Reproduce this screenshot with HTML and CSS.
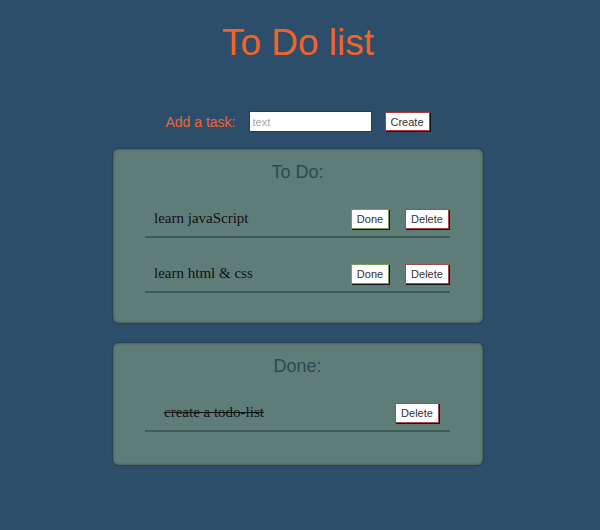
FILE: index.html
```html
<!DOCTYPE html>
<html>
<head>
<meta charset="utf-8">
<title>To Do list</title>
<link rel="stylesheet" href="styles.css">
</head>
<body>
<h1 class="title">To Do list</h1>
<div class="add-row">
  <label class="add-label" for="task">Add a task:</label>
  <input class="add-input" id="task" type="text" placeholder="text">
  <button class="btn btn-create">Create</button>
</div>
<section class="card card-todo">
  <h2 class="card-title">To Do:</h2>
  <ul class="list">
    <li class="item">
      <span class="item-text">learn javaScript</span>
      <button class="btn btn-done">Done</button>
      <button class="btn btn-delete">Delete</button>
    </li>
    <li class="item">
      <span class="item-text">learn html &amp; css</span>
      <button class="btn btn-done">Done</button>
      <button class="btn btn-delete">Delete</button>
    </li>
  </ul>
</section>
<section class="card card-done">
  <h2 class="card-title">Done:</h2>
  <ul class="list">
    <li class="item item-finished">
      <span class="item-text">create a todo-list</span>
      <button class="btn btn-delete">Delete</button>
    </li>
  </ul>
</section>
</body>
</html>
```
FILE: styles.css
```css
* { box-sizing: border-box; }
html, body { margin: 0; padding: 0; }
body {
  background: #2c4e6a;
  font-family: "Liberation Sans", Arial, sans-serif;
  width: 600px;
  height: 530px;
  overflow: hidden;
}
.title {
  margin: 22px 0 0;
  text-align: center;
  font-size: 37px;
  line-height: 42px;
  font-weight: normal;
  color: #f26328;
  padding-right: 4px;
}
.add-row {
  margin-top: 47px;
  display: flex;
  justify-content: center;
  align-items: center;
  height: 21px;
  padding-right: 5px;
}
.add-label {
  color: #ef6434;
  font-size: 14px;
  margin-right: 13px;
}
.add-input {
  width: 123px;
  height: 21px;
  border: 1px solid #1f3f5a;
  background: #fff;
  font-family: "Liberation Sans", Arial, sans-serif;
  font-size: 11px;
  padding: 0 3px;
  margin-right: 13px;
}
.add-input::placeholder { color: #a6a6a6; }
.btn {
  background: #fff;
  font-family: "Liberation Sans", Arial, sans-serif;
  font-size: 11px;
  color: #333;
  height: 20px;
  padding: 0 5px;
  border: 1px solid #b33a3a;
  border-radius: 0;
  box-shadow: 1px 1px 0 #151515;
  line-height: 18px;
}
.btn-create { height: 19px; width: 45px; padding: 0; }
.btn-done { border-color: #7e9a5a; width: 38px; padding: 0; }
.btn-delete { border-color: #a44a4a; width: 44px; padding: 0; margin-left: 16px; }
.card {
  width: 370px;
  margin: 17px auto 0 113px;
  background: #5f7d78;
  border-radius: 5px;
  box-shadow: inset 0 0 3px rgba(0,0,0,0.45), 0 0 2px rgba(0,0,0,0.5);
  padding: 12px 33px 30px 32px;
}
.card-done { margin-top: 20px; padding-bottom: 33px; }
.card-title {
  margin: 0;
  text-align: center;
  font-size: 18px;
  line-height: 22px;
  font-weight: normal;
  color: #2b4a4f;
}
.list { list-style: none; margin: 0; padding: 0; }
.item {
  display: flex;
  align-items: center;
  padding: 25px 1px 7px 9px;
  height: 55px;
  border-bottom: 2px solid #3e5b58;
}
.item-text {
  flex: 1;
  font-family: "Liberation Serif", "Times New Roman", serif;
  font-size: 15px;
  color: #111;
}
.item-finished { padding-left: 19px; padding-right: 11px; }
.item-finished .item-text { text-decoration: line-through; }
.item-finished .btn-delete { margin-left: 0; }
```
